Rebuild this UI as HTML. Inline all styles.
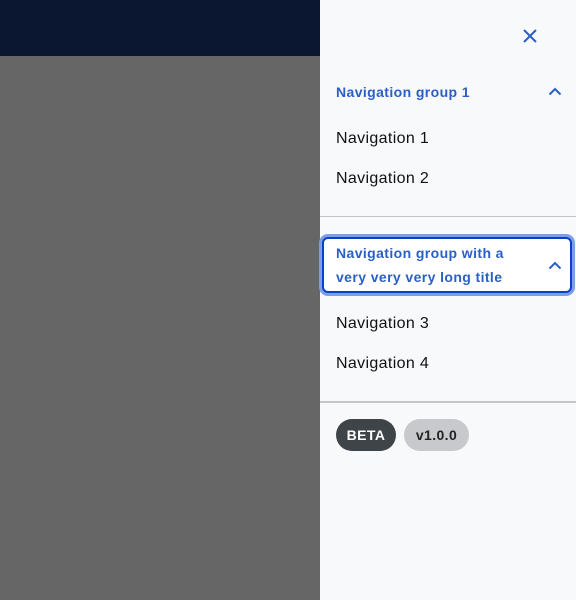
<!DOCTYPE html>
<html><head><style>
body{margin:0;width:576px;height:600px;position:relative;overflow:hidden;font-family:"Liberation Sans",sans-serif;background:#666}
.hdr{position:absolute;left:0;top:0;width:576px;height:56px;background:#0b1730}
.ov{position:absolute;left:0;top:56px;width:320px;height:544px;background:#666}
.p{position:absolute;left:320px;top:0;width:256px;height:600px;background:#f8f9fa}
.g{position:absolute;left:16px;color:#2a5fc6;font-weight:bold;font-size:14px;line-height:24px;letter-spacing:0.4px}
.n{position:absolute;left:16px;color:#111;font-size:16px;line-height:20px;letter-spacing:0.35px}
.sep{position:absolute;left:0;width:256px;height:1px;background:#c6c6c6}
.chev{position:absolute;right:14px}
.b{position:absolute;top:419px;height:32px;border-radius:16px;font-weight:bold;font-size:14px;line-height:32px;text-align:center;letter-spacing:0.4px}
</style></head><body>
<div class="hdr"></div><div class="ov"></div>
<div class="p">
<svg style="position:absolute;left:202px;top:28px" width="16" height="16" viewBox="0 0 16 16"><path d="M2 2L14 14M14 2L2 14" stroke="#2a5fc6" stroke-width="2"/></svg>
<div class="g" style="top:80px">Navigation group 1</div>
<svg class="chev" style="top:87px" width="14" height="9" viewBox="0 0 14 9"><path d="M1.5 7.5L7 2L12.5 7.5" fill="none" stroke="#2a5fc6" stroke-width="2"/></svg>
<div class="n" style="top:129px">Navigation 1</div>
<div class="n" style="top:169px">Navigation 2</div>
<div class="sep" style="top:216px"></div>
<div style="position:absolute;left:2px;top:237px;width:246px;height:52px;border:2px solid #0a40d0;border-radius:6px;box-shadow:0 0 0 3px #7f9ee8;background:#fff"></div>
<div class="g" style="top:241px">Navigation group with a<br>very very very long title</div>
<svg class="chev" style="top:261px" width="14" height="9" viewBox="0 0 14 9"><path d="M1.5 7.5L7 2L12.5 7.5" fill="none" stroke="#2a5fc6" stroke-width="2"/></svg>
<div class="n" style="top:314px">Navigation 3</div>
<div class="n" style="top:354px">Navigation 4</div>
<div class="sep" style="top:401px;height:2px"></div>
<div class="b" style="left:16px;width:60px;background:#3f4448;color:#fff">BETA</div>
<div class="b" style="left:84px;width:65px;background:#c8c9cc;color:#222">v1.0.0</div>
</div>
</body></html>
